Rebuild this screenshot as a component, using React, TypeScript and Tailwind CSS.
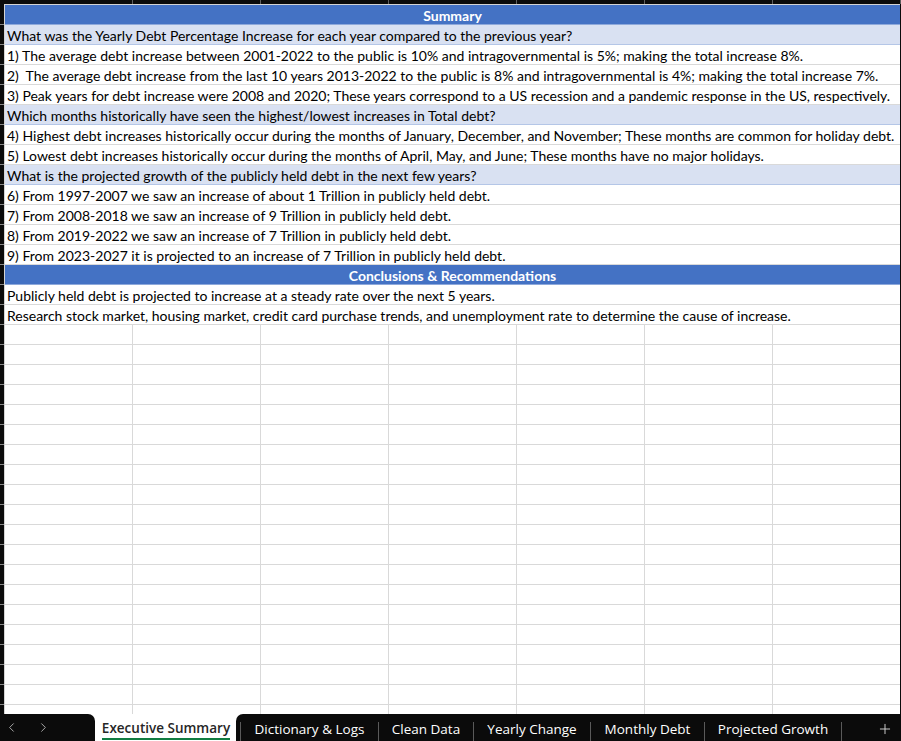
import { ChevronLeft, ChevronRight, Plus } from "lucide-react";

type Row = { kind: "header" | "question" | "text"; text: string };

const ROWS: Row[] = [
  { kind: "header", text: "Summary" },
  { kind: "question", text: "What was the Yearly Debt Percentage Increase for each year compared to the previous year?" },
  { kind: "text", text: "1) The average debt increase between 2001-2022 to the public is 10% and intragovernmental is 5%; making the total increase 8%." },
  { kind: "text", text: "2)  The average debt increase from the last 10 years 2013-2022 to the public is 8% and intragovernmental is 4%; making the total increase 7%." },
  { kind: "text", text: "3) Peak years for debt increase were 2008 and 2020; These years correspond to a US recession and a pandemic response in the US, respectively." },
  { kind: "question", text: "Which months historically have seen the highest/lowest increases in Total debt?" },
  { kind: "text", text: "4) Highest debt increases historically occur during the months of January, December, and November; These months are common for holiday debt." },
  { kind: "text", text: "5) Lowest debt increases historically occur during the months of April, May, and June; These months have no major holidays." },
  { kind: "question", text: "What is the projected growth of the publicly held debt in the next few years?" },
  { kind: "text", text: "6) From 1997-2007 we saw an increase of about 1 Trillion in publicly held debt." },
  { kind: "text", text: "7) From 2008-2018 we saw an increase of 9 Trillion in publicly held debt." },
  { kind: "text", text: "8) From 2019-2022 we saw an increase of 7 Trillion in publicly held debt." },
  { kind: "text", text: "9) From 2023-2027 it is projected to an increase of 7 Trillion in publicly held debt." },
  { kind: "header", text: "Conclusions & Recommendations" },
  { kind: "text", text: "Publicly held debt is projected to increase at a steady rate over the next 5 years." },
  { kind: "text", text: "Research stock market, housing market, credit card purchase trends, and unemployment rate to determine the cause of increase." },
];

const EMPTY_ROWS = 20;
const COLS = [0, 1, 2, 3, 4, 5, 6];
const TABS = [
  { name: "Dictionary & Logs", w: "w-[137px]" },
  { name: "Clean Data", w: "w-[94px]" },
  { name: "Yearly Change", w: "w-[116px]" },
  { name: "Monthly Debt", w: "w-[113px]" },
  { name: "Projected Growth", w: "w-[136px]" },
];

function SheetRow({ row }: { row: Row }) {
  if (row.kind === "header") {
    return (
      <div className="flex h-[20px] items-center justify-center border-b border-[#8ea9db] bg-[#4472c4] pt-[1px] font-bold text-white">
        {row.text}
      </div>
    );
  }
  const bg = row.kind === "question" ? "bg-[#d9e1f2] border-[#b4c6e7]" : "bg-white border-[#d9d9d9]";
  return (
    <div className={`flex h-[20px] items-center whitespace-pre border-b pl-[2px] pt-[1px] text-black ${bg}`}>
      {row.text}
    </div>
  );
}

export default function App() {
  return (
    <div className="flex h-[741px] w-[901px] flex-col overflow-hidden bg-[#0b0b0b] font-['Lato',sans-serif] text-[14px]">
      <div className="flex h-[4px] shrink-0 pl-[5px]">
        {COLS.map((c) => (
          <div key={c} className="w-[128px] shrink-0 border-r border-[#5e5e5e]" />
        ))}
      </div>
      <div className="flex min-h-0 flex-1">
        <div className="flex w-[4px] shrink-0 flex-col pt-[1px]">
          {Array.from({ length: ROWS.length + EMPTY_ROWS }).map((_, i) => (
            <div key={i} className="h-[20px] shrink-0 border-b border-[#8a8a8a]" />
          ))}
        </div>
        <div className="flex w-[896px] flex-col overflow-hidden border-l border-t border-[#d4d4d4] bg-white">
          {ROWS.map((r, i) => (
            <SheetRow key={i} row={r} />
          ))}
          {Array.from({ length: EMPTY_ROWS }).map((_, i) => (
            <div key={i} className="flex h-[20px] shrink-0 border-b border-[#d9d9d9]">
              {COLS.map((c) => (
                <div key={c} className="w-[128px] shrink-0 border-r border-[#d9d9d9]" />
              ))}
            </div>
          ))}
        </div>
      </div>
      <div className="flex h-[27px] shrink-0 bg-white font-['Open_Sans',sans-serif] text-[13.5px]">
        <div className="flex w-[95px] shrink-0 items-center rounded-tr-[7px] bg-[#0b0b0b] text-[#b0b0b0]">
          <ChevronLeft size={15} strokeWidth={1.5} className="ml-[4px]" />
          <ChevronRight size={15} strokeWidth={1.5} className="ml-[17px]" />
        </div>
        <div className="flex w-[141px] shrink-0 flex-col items-center justify-center pl-[1px] pt-[2px]">
          <span className="border-b-2 border-[#107c41] font-semibold leading-[20px] text-[#262626]">Executive Summary</span>
        </div>
        <div className="flex flex-1 items-center rounded-tl-[7px] bg-[#0b0b0b] pl-[4px] text-white">
          {TABS.map((t) => (
            <div key={t.name} className="flex h-full items-center">
              <div className="mt-[8px] h-[19px] w-px bg-[#5a5a5a]" />
              <div className={`${t.w} shrink-0 pt-[3px] text-center`}>{t.name}</div>
            </div>
          ))}
          <div className="mt-[8px] h-[19px] w-px self-center bg-[#5a5a5a]" />
          <Plus size={16} strokeWidth={1.3} className="ml-[35px] mt-[3px] text-[#e6e6e6]" />
        </div>
      </div>
    </div>
  );
}
